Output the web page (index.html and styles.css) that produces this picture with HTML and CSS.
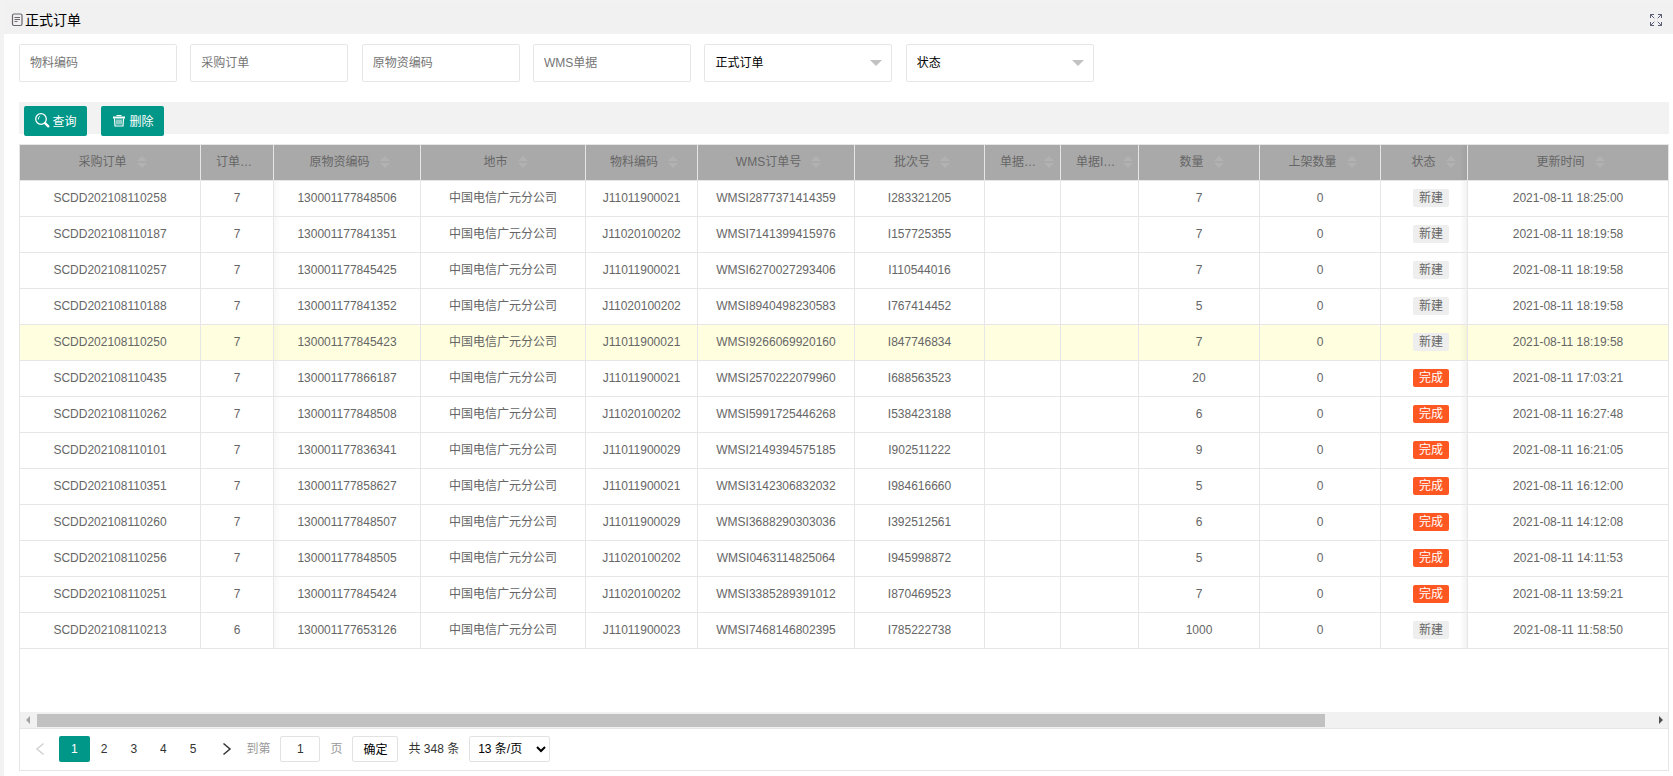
FILE: index.html
```
<!DOCTYPE html>
<html lang="zh-CN">
<head>
<meta charset="utf-8">
<title>正式订单</title>
<link rel="stylesheet" href="styles.css">
</head>

<body>

<div class="page">

<header class="page-title">
<svg class="icon-doc" width="12" height="14" viewBox="0 0 12 14" fill="none" stroke="#6b6570">
<rect x="1.500" y="1" width="9.500" height="11.500" rx="1.500" stroke-width="1.200"/>
<path d="M3.500 4.500h5.500M3.500 6.500h5.500M3.500 8.500h3"/>
</svg>
<h1>正式订单</h1>
<button type="button" class="full-btn" aria-label="全屏">
<svg width="14" height="14" viewBox="0 0 14 14" fill="none" stroke="#5b6078">
<path d="M1.500 5v-3.500h3.500M1.500 1.500l3.800 3.800M9 1.500h3.500v3.500M12.500 1.500l-3.800 3.800M1.500 9v3.500h3.500M1.500 12.500l3.800-3.800M12.500 9v3.500h-3.500M12.500 12.500l-3.800-3.800"/>
</svg>
</button>
</header>

<main class="content">

<form class="search">
<input type="text" class="field" placeholder="物料编码" aria-label="物料编码">
<input type="text" class="field" placeholder="采购订单" aria-label="采购订单">
<input type="text" class="field" placeholder="原物资编码" aria-label="原物资编码">
<input type="text" class="field" placeholder="WMS单据" aria-label="WMS单据">
<span class="select-box"><select aria-label="订单类型"><option>正式订单</option></select></span>
<span class="select-box"><select aria-label="状态"><option>状态</option></select></span>
</form>

<div class="toolbar">
<button type="button" class="btn">
<svg width="16" height="16" viewBox="0 0 16 16" fill="none" stroke="#fff">
<circle cx="7" cy="7" r="5.300" stroke-width="1.300"/>
<path d="M4.300 7.500a2.800 2.800 0 0 1 1.800-3.200" stroke-width="1"/>
<path d="M11.300 11.300l3 3" stroke-width="2.400" stroke-linecap="round"/>
</svg>
查询</button>
<button type="button" class="btn">
<svg width="16" height="16" viewBox="0 0 16 16" fill="none" stroke="#fff">
<path d="M5.500 3.500h5" stroke-width="1"/>
<path d="M2 5.500h12" stroke-width="2"/>
<path d="M3.500 6.500l.5 7.500h8l.5-7.500" stroke-width="1.200"/>
<path d="M6 7.500v5M8 7.500v5M10 7.500v5" stroke-width="1.100"/>
</svg>
删除</button>
</div>

<div class="grid">
<table>
<colgroup>
<col class="w-order"><col class="w-line"><col class="w-origin"><col class="w-city"><col class="w-code"><col class="w-wms"><col class="w-batch">
<col class="w-doc"><col class="w-docid"><col class="w-num"><col class="w-num"><col class="w-status"><col class="w-time">
</colgroup>
<thead>
<tr>
<th>采购订单<i class="sort"></i></th>
<th class="cut">订单…</th>
<th>原物资编码<i class="sort"></i></th>
<th>地市<i class="sort"></i></th>
<th>物料编码<i class="sort"></i></th>
<th>WMS订单号<i class="sort"></i></th>
<th>批次号<i class="sort"></i></th>
<th class="cut">单据…<i class="sort"></i></th>
<th class="cut">单据I…<i class="sort"></i></th>
<th>数量<i class="sort"></i></th>
<th>上架数量<i class="sort"></i></th>
<th>状态<i class="sort"></i></th>
<th>更新时间<i class="sort"></i></th>
</tr>
</thead>
<tbody id="rows"></tbody>
</table>

<div class="blank"></div>

<div class="scrollbar">
<span class="arrow-left"></span>
<div class="track"><div class="thumb"></div></div>
<span class="arrow-right"></span>
</div>

<div class="pager">
<a class="prev" aria-label="上一页"><svg width="10" height="14" viewBox="0 0 10 14" fill="none" stroke="#d2d2d2" stroke-width="1.500"><path d="M8.500 1.500l-6.500 5.500 6.500 5.500"/></svg></a>
<a class="num current" href="#">1</a>
<a class="num" href="#">2</a>
<a class="num" href="#">3</a>
<a class="num" href="#">4</a>
<a class="num" href="#">5</a>
<a class="next" href="#" aria-label="下一页"><svg width="10" height="14" viewBox="0 0 10 14" fill="none" stroke="#333" stroke-width="1.500"><path d="M1.500 1.500l6.500 5.500-6.500 5.500"/></svg></a>
<label class="skip">到第<input type="text" value="1">页</label>
<button type="button" class="go">确定</button>
<span class="count">共 348 条</span>
<select class="limit" aria-label="每页条数"><option>13 条/页</option></select>
</div>
</div>

</main>
</div>

<script>
// order, line, origin code, material code, wms order, batch, qty, done, time
var orders = [
["SCDD202108110258", 7, "130001177848506", "J11011900021", "WMSI2877371414359", "I283321205", 7, false, "2021-08-11 18:25:00"],
["SCDD202108110187", 7, "130001177841351", "J11020100202", "WMSI7141399415976", "I157725355", 7, false, "2021-08-11 18:19:58"],
["SCDD202108110257", 7, "130001177845425", "J11011900021", "WMSI6270027293406", "I110544016", 7, false, "2021-08-11 18:19:58"],
["SCDD202108110188", 7, "130001177841352", "J11020100202", "WMSI8940498230583", "I767414452", 5, false, "2021-08-11 18:19:58"],
["SCDD202108110250", 7, "130001177845423", "J11011900021", "WMSI9266069920160", "I847746834", 7, false, "2021-08-11 18:19:58"],
["SCDD202108110435", 7, "130001177866187", "J11011900021", "WMSI2570222079960", "I688563523", 20, true, "2021-08-11 17:03:21"],
["SCDD202108110262", 7, "130001177848508", "J11020100202", "WMSI5991725446268", "I538423188", 6, true, "2021-08-11 16:27:48"],
["SCDD202108110101", 7, "130001177836341", "J11011900029", "WMSI2149394575185", "I902511222", 9, true, "2021-08-11 16:21:05"],
["SCDD202108110351", 7, "130001177858627", "J11011900021", "WMSI3142306832032", "I984616660", 5, true, "2021-08-11 16:12:00"],
["SCDD202108110260", 7, "130001177848507", "J11011900029", "WMSI3688290303036", "I392512561", 6, true, "2021-08-11 14:12:08"],
["SCDD202108110256", 7, "130001177848505", "J11020100202", "WMSI0463114825064", "I945998872", 5, true, "2021-08-11 14:11:53"],
["SCDD202108110251", 7, "130001177845424", "J11020100202", "WMSI3385289391012", "I870469523", 7, true, "2021-08-11 13:59:21"],
["SCDD202108110213", 6, "130001177653126", "J11011900023", "WMSI7468146802395", "I785222738", 1000, false, "2021-08-11 11:58:50"]
];
var active = 4;
var html = "";

for (var i = 0; i < orders.length; i++) {
	var o = orders[i];
	var badge = o[7] ? '<span class="badge done">完成</span>' : '<span class="badge">新建</span>';
	var cells = [o[0], o[1], o[2], "中国电信广元分公司", o[3], o[4], o[5], "", "", o[6], 0, badge, o[8]];
	html += (i == active ? '<tr class="active">' : "<tr>") + "<td>" + cells.join("</td><td>") + "</td></tr>";
}
document.getElementById("rows").innerHTML = html;
</script>

</body>
</html>
```

FILE: styles.css
```
*{
box-sizing:border-box;
}

body{
margin:0;
padding:3px 0 0 4px;
background-color:#f2f2f2;
font-family:"Liberation Sans", "Noto Sans CJK SC", sans-serif;
font-size:12px;
color:#666;
}

input,select,button{
font-family:inherit;
font-size:12px;
}

a{
color:#333;
text-decoration:none;
}

.page{
display:flex;
flex-direction:column;
min-height:calc(100vh - 3px);
background-color:white;
}

/* title bar */
.page-title{
display:flex;
align-items:center;
height:31px;
padding:2px 10px 0 7px;
background-color:#f1f1f1;
}
.page-title h1{
flex:1;
margin:0 0 0 2px;
font-size:14px;
line-height:20px;
font-weight:normal;
color:black;
}
.full-btn{
display:flex;
padding:0;
border:0;
background:none;
}

.content{
display:flex;
flex-direction:column;
flex:1;
padding:10px 4px 5px 15px;
}

/* search fields */
.search{
height:38px;
margin-bottom:20px;
white-space:nowrap;
}
.field,.select-box select{
height:38px;
padding:0 10px;
border:1px solid #e6e6e6;
border-radius:2px;
background-color:white;
vertical-align:top;
}
.field{
width:158px;
margin-right:10px;
}
.field::placeholder{
color:#757575;
}
.select-box{
display:inline-block;
position:relative;
width:188px;
margin-right:10px;
vertical-align:top;
}
.select-box select{
width:100%;
appearance:none;
color:black;
}
.select-box::after{
content:"";
position:absolute;
right:10px;
top:16px;
border:6px solid transparent;
border-top-color:#c2c2c2;
pointer-events:none;
}

/* buttons over the table */
.toolbar{
display:flex;
gap:14px;
height:32px;
margin-bottom:10px;
padding:4px 5px 0;
background-color:#f2f2f2;
}
.btn{
display:flex;
align-items:center;
justify-content:center;
gap:2px;
width:63px;
height:30px;
padding:0 0 2px;
border:0;
border-radius:2px;
background-color:#009688;
color:white;
}

/* table */
.grid{
display:flex;
flex-direction:column;
flex:1;
border:1px solid #e6e6e6;
}
table{
width:100%;
table-layout:fixed;
border-collapse:separate;
border-spacing:0;
}
.w-order{width:181px;}
.w-line{width:73px;}
.w-origin{width:147px;}
.w-city{width:165px;}
.w-code{width:112px;}
.w-wms{width:157px;}
.w-batch{width:130px;}
.w-doc{width:76px;}
.w-docid{width:78px;}
.w-num{width:121px;}
.w-status{width:87px;}
.w-time{width:200px;}

th,td{
height:36px;
padding:0 0 2px;
border-right:1px solid #e6e6e6;
border-bottom:1px solid #e6e6e6;
font-weight:normal;
line-height:20px;
text-align:center;
white-space:nowrap;
overflow:hidden;
}
th{
background-color:#a9a9a9;
}
th.cut{
padding-left:15px;
text-align:left;
}
th:last-child,td:last-child{
border-right:0;
}

th:nth-child(12),td:nth-child(12){
padding-left:14px;
background-image:linear-gradient(to left, rgba(0,0,0,.05), transparent 7px);
}
td:nth-child(3){
background-image:linear-gradient(to right, rgba(0,0,0,.03), transparent 7px);
}
.active td{
background-color:#ffffe0;
}

.sort{
display:inline-flex;
flex-direction:column;
gap:2px;
width:10px;
margin:0 -5px 0 10px;
vertical-align:middle;
}
.cut .sort{
margin-left:8px;
}
.sort::before,.sort::after{
content:"";
border:5px solid transparent;
}
.sort::before{
border-top:0;
border-bottom-color:#b2b2b2;
}
.sort::after{
border-bottom:0;
border-top-color:#b2b2b2;
}

.badge{
display:inline-block;
height:18px;
padding:0 6px;
border-radius:2px;
background-color:#eee;
line-height:18px;
vertical-align:middle;
}
.done{
background-color:#ff5722;
color:white;
}

.blank{
flex:1;
min-height:40px;
}

.scrollbar{
display:flex;
align-items:center;
justify-content:space-between;
height:16px;
padding:0 5px 0 6px;
background-color:#f1f1f1;
}
.track{
flex:1;
margin:0 12px 0 7px;
}
.thumb{
width:80%;
height:13px;
background-color:#c1c1c1;
}
.arrow-left,.arrow-right{
border:4px solid transparent;
}
.arrow-left{
border-left:0;
border-right-color:#a3a3a3;
}
.arrow-right{
border-right:0;
border-left-color:#505050;
}

/* pagination */
.pager{
display:flex;
align-items:center;
height:42px;
padding:0 15px 2px;
border-top:1px solid #e6e6e6;
line-height:26px;
color:#333;
}
.prev,.next{
display:flex;
}
.prev{
margin-right:14px;
}
.next{
margin:0 14px 0 15px;
}
.num{
margin-right:-1px;
padding:0 12px;
}
.current{
border-radius:2px;
background-color:#009688;
color:white;
}
.skip{
color:#999;
}
.skip input{
width:40px;
height:26px;
margin:0 10px;
padding:0;
border:1px solid #e2e2e2;
border-radius:2px;
text-align:center;
color:#333;
vertical-align:top;
}
.go{
width:46px;
height:26px;
margin:0 10px;
padding:0;
border:1px solid #e2e2e2;
border-radius:2px;
background-color:white;
color:black;
}
.limit{
width:81px;
height:26px;
margin-left:10px;
padding:0 4px;
border:1px solid #e2e2e2;
border-radius:2px;
background-color:white;
color:black;
}
```
